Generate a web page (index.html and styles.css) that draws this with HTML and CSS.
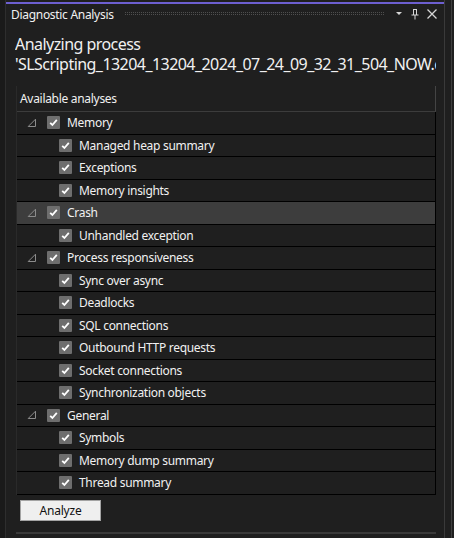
FILE: index.html
```html
<!DOCTYPE html>
<html>
<head>
<meta charset="utf-8">
<link rel="stylesheet" href="styles.css">
</head>
<body>
<div class="window">
  <div class="gutter-left"></div>
  <div class="panel">
    <div class="titlebar">
      <span class="title">Diagnostic Analysis</span>
      <span class="grip"></span>
      <span class="tb-icons">
        <svg width="10" height="10" viewBox="0 0 10 10"><path d="M2 3 L8 3 L5 6 Z" fill="#d6d6d6"/></svg>
        <svg width="10" height="12" viewBox="0 0 10 12"><path d="M3 1.5 H7 M3.5 1.5 V7 M6.5 1.5 V7 M1.5 7 H8.5 M5 7 V11.5" stroke="#d6d6d6" stroke-width="1" fill="none"/></svg>
        <svg width="12" height="12" viewBox="0 0 12 12"><path d="M1.5 1.5 L10.5 10.5 M10.5 1.5 L1.5 10.5" stroke="#d6d6d6" stroke-width="1.3" fill="none"/></svg>
      </span>
    </div>
    <div class="content">
      <h1 class="heading">Analyzing process<br>'SLScripting_13204_13204_2024_07_24_09_32_31_504_NOW.dmp'</h1>
      <div class="list">
        <div class="list-header">Available analyses</div>
        <div class="rows" id="rows"></div>
      </div>
      <div class="actions"><button class="btn">Analyze</button></div>
      <div class="hscroll"></div>
    </div>
  </div>
  <div class="gutter-right"></div>
</div>
<script>
var data=[["Memory",["Managed heap summary","Exceptions","Memory insights"]],["Crash",["Unhandled exception"]],["Process responsiveness",["Sync over async","Deadlocks","SQL connections","Outbound HTTP requests","Socket connections","Synchronization objects"]],["General",["Symbols","Memory dump summary","Thread summary"]]];
var tri='<svg class="tri" width="10" height="10" viewBox="0 0 10 10"><path d="M8.5 1.2 L8.5 8.5 L1.2 8.5 Z" fill="none" stroke="#8c8c8c" stroke-width="1"/></svg>';
var cb='<span class="cb"><svg width="13" height="13" viewBox="0 0 13 13"><path d="M3.2 6.8 L5.4 9 L9.8 3.8" fill="none" stroke="#fff" stroke-width="1.8"/></svg></span>';
var h='';
data.forEach(function(g){
  h+='<div class="row group'+(g[0]==="Crash"?' sel':'')+'">'+tri+cb+'<span class="lbl">'+g[0]+'</span></div>';
  g[1].forEach(function(c){h+='<div class="row child">'+cb+'<span class="lbl">'+c+'</span></div>';});
});
document.getElementById('rows').innerHTML=h;
</script>
</body>
</html>
```
FILE: styles.css
```css
html,body{margin:0;padding:0;background:#1f1f1f;}
body{font-family:"Segoe UI","Noto Sans","Open Sans",sans-serif;color:#f1f1f1;overflow:hidden;letter-spacing:-0.3px;}
.window{display:flex;height:538px;width:454px;}
.gutter-left{width:5px;background:#1a1a1a;border-right:1px solid #2e2e2e;flex:none;}
.panel{width:438px;flex:none;display:flex;flex-direction:column;border-top:2px solid #6d5fd0;margin-top:2px;background:#1f1f1f;}
.gutter-right{flex:1;border-left:1px solid #3a3a3a;position:relative;background:#1f1f1f;}
.gutter-right::after{content:"";position:absolute;left:6px;top:0;bottom:0;width:1px;background:#3f3f3f;}
.titlebar{height:20px;display:flex;align-items:center;padding:0 6px 0 5px;font-size:12px;}
.title{white-space:nowrap;color:#f1f1f1;}
.grip{flex:1;height:4px;margin:0 10px 0 10px;background:conic-gradient(#4e4e4e 25%,transparent 0) 0 0/2px 2px;}
.tb-icons{display:flex;align-items:center;gap:6px;}
.content{padding:0 8px 0 10px;display:flex;flex-direction:column;}
.heading{font-size:16px;font-weight:normal;line-height:20px;margin:10px 0 12px -1px;white-space:nowrap;overflow:hidden;color:#f1f1f1;letter-spacing:-0.55px;}
.list{border-left:1px solid #2a2a2a;}
.list-header{height:25px;line-height:26px;font-size:12px;padding-left:3px;border-bottom:1px solid #3c3c3c;border-right:1px solid #444;}
.rows{border-right:1px solid #000;border-bottom:1px solid #000;}
.row{height:21.5px;border-bottom:1px solid #000;display:flex;align-items:center;font-size:12px;}
.row:last-child{border-bottom:none;}
.row.sel{background:#3d3d3d;}
.tri{margin-left:10px;flex:none;}
.cb{width:13px;height:13px;background:#6e6e6e;border-radius:1px;display:inline-block;flex:none;}
.cb svg{display:block;}
.group .cb{margin-left:10px;}
.child .cb{margin-left:42px;}
.lbl{margin-left:7px;white-space:nowrap;}
.actions{display:flex;padding:5px 0 0 4px;}
.btn{width:81px;height:21px;background:#efefef;border:1px solid #a3a3a3;font-family:inherit;font-size:12px;letter-spacing:-0.2px;color:#111;padding:0;}
.hscroll{margin-top:11px;height:2px;background:#3a3a3a;}
```
